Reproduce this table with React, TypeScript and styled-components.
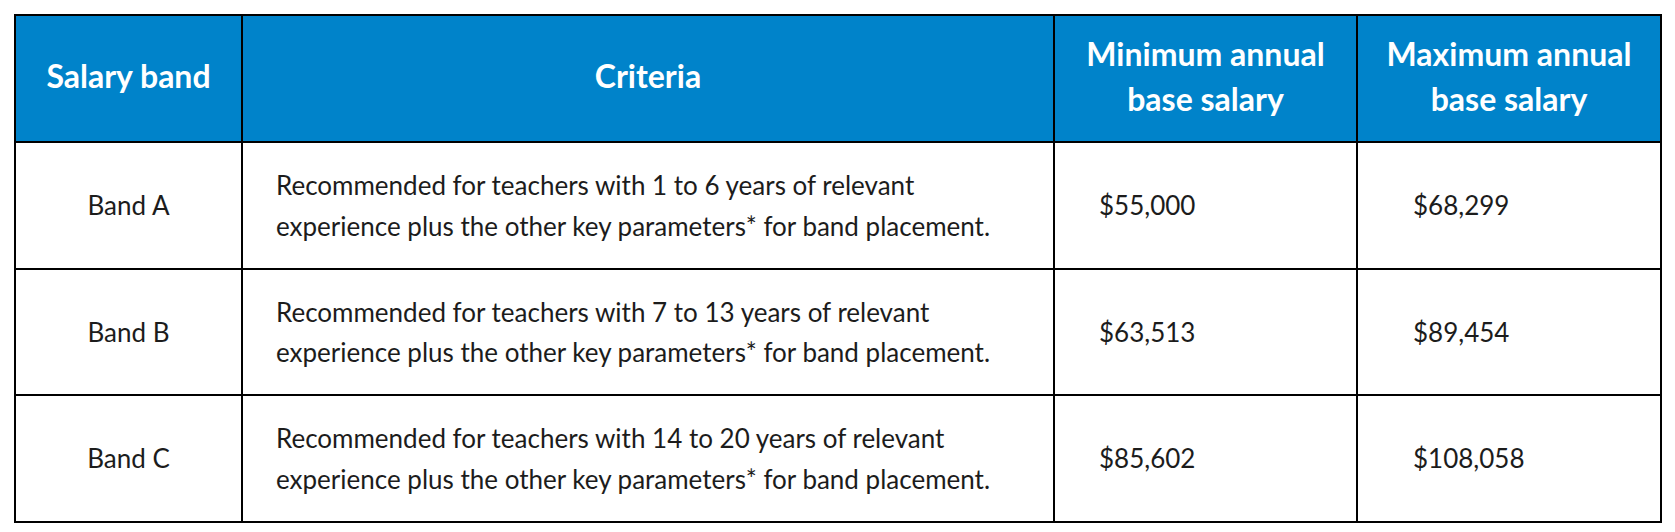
import React from "react";
import styled, { createGlobalStyle } from "styled-components";

const Global = createGlobalStyle`
  html, body { margin: 0; padding: 0; background: #fff; }
  body { font-family: "Lato", "Open Sans", Arial, sans-serif; }
`;

const Page = styled.div`
  padding: 14px 0 0 14px;
`;

const Grid = styled.div`
  display: grid;
  grid-template-columns: 227px 812px 303px 304px;
  grid-template-rows: 127px 127px 126px 127px;
  width: 1648px;
  box-sizing: border-box;
  border-top: 2px solid #000;
  border-left: 2px solid #000;
`;

const Cell = styled.div<{ $head?: boolean; $align?: "center" | "left"; $pl?: number }>`
  box-sizing: border-box;
  border-right: 2px solid #000;
  border-bottom: 2px solid #000;
  display: flex;
  align-items: center;
  justify-content: ${(p) => (p.$align === "left" ? "flex-start" : "center")};
  text-align: ${(p) => (p.$align === "left" ? "left" : "center")};
  padding-left: ${(p) => p.$pl ?? 0}px;
  padding-bottom: ${(p) => (p.$head ? 6 : 0)}px;
  background: ${(p) => (p.$head ? "#0083ca" : "#fff")};
  color: ${(p) => (p.$head ? "#fff" : "#1c1c1c")};
  font-weight: ${(p) => (p.$head ? 700 : 400)};
  font-size: ${(p) => (p.$head ? "32px" : "26px")};
  line-height: ${(p) => (p.$head ? "45px" : "40.5px")};
`;

const rows = [
  { band: "Band A", yrs: "1 to 6", min: "$55,000", max: "$68,299" },
  { band: "Band B", yrs: "7 to 13", min: "$63,513", max: "$89,454" },
  { band: "Band C", yrs: "14 to 20", min: "$85,602", max: "$108,058" },
];

export default function App() {
  return (
    <>
      <Global />
      <Page>
        <Grid>
          <Cell $head>Salary band</Cell>
          <Cell $head>Criteria</Cell>
          <Cell $head>
            Minimum annual
            <br />
            base salary
          </Cell>
          <Cell $head>
            Maximum annual
            <br />
            base salary
          </Cell>
          {rows.map((r) => (
            <React.Fragment key={r.band}>
              <Cell>{r.band}</Cell>
              <Cell $align="left" $pl={33}>
                <div>
                  Recommended for teachers with {r.yrs} years of relevant
                  <br />
                  experience plus the other key parameters* for band placement.
                </div>
              </Cell>
              <Cell $align="left" $pl={44}>
                {r.min}
              </Cell>
              <Cell $align="left" $pl={55}>
                {r.max}
              </Cell>
            </React.Fragment>
          ))}
        </Grid>
      </Page>
    </>
  );
}
